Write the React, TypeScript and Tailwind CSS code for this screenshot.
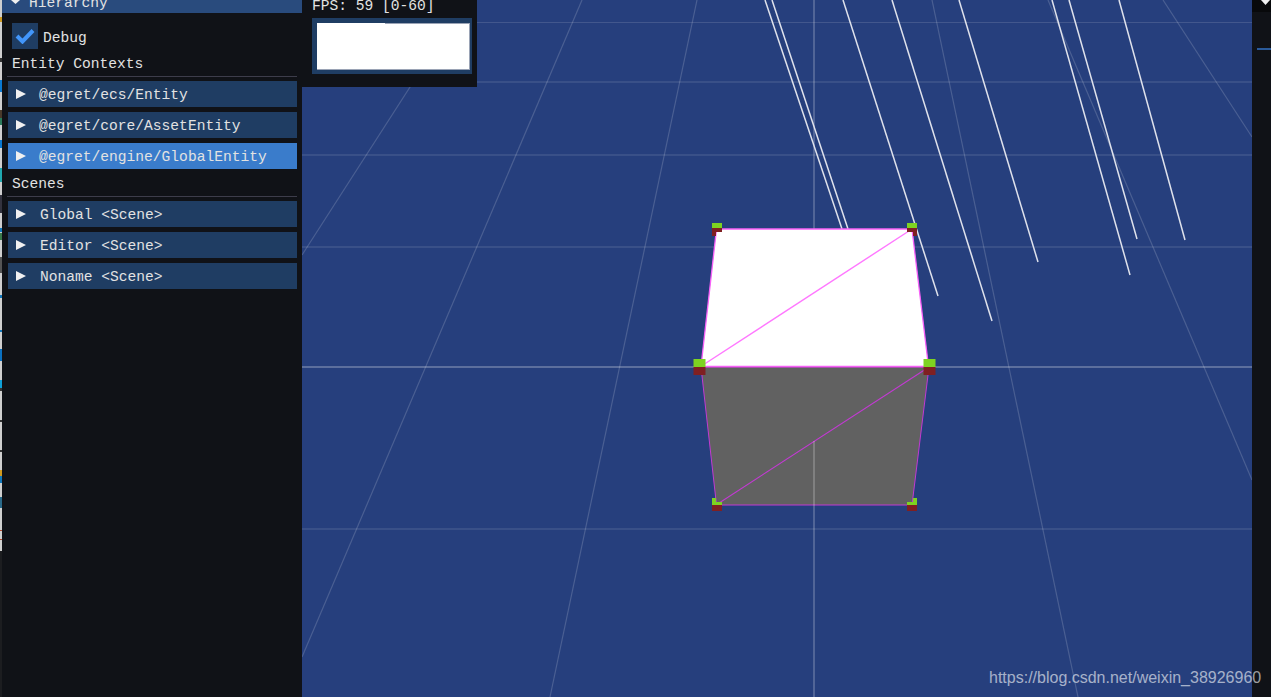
const mono = "font-['Liberation_Mono',monospace] text-[14.6px] leading-[17px] text-[#e2e2e2]";

const greys = [
  { a: [582, 0], b: [302, 657] },
  { a: [697, 0], b: [550, 697] },
  { a: [466, 0], b: [302, 255] },
  { a: [932, 0], b: [1078, 697] },
  { a: [1048, 0], b: [1252, 480] },
  { a: [1163, 0], b: [1252, 137] },
];
const whites = [
  [765, 0, 842, 229],
  [772, 0, 848, 229],
  [843, 0, 938, 296],
  [892, 0, 992, 321],
  [959, 0, 1038, 262],
  [1052, 0, 1130, 275],
  [1069, 0, 1137, 239],
  [1119, 0, 1185, 240],
];
const horizontals = [
  { y: 22.5, o: 0.13, w: 1 },
  { y: 82, o: 0.18, w: 1.2 },
  { y: 155, o: 0.18, w: 1.2 },
  { y: 247, o: 0.18, w: 1.2 },
  { y: 367, o: 0.25, w: 2 },
  { y: 529, o: 0.18, w: 1.2 },
];

const GREEN = "#7ed321";
const RED = "#7f2022";

function TopHandle({ x, right }: { x: number; right?: boolean }) {
  return (
    <g>
      <rect x={x} y={223} width={10} height={5} fill={GREEN} />
      <rect x={x} y={228} width={10} height={4} fill={RED} />
      <rect x={right ? x + 6 : x} y={232} width={4} height={4} fill={RED} />
    </g>
  );
}

function BottomHandle({ x, right }: { x: number; right?: boolean }) {
  return (
    <g>
      <rect x={right ? x + 6 : x} y={498} width={4} height={4} fill={GREEN} />
      <rect x={x} y={502} width={10} height={3} fill={GREEN} />
      <rect x={x} y={505} width={10} height={6} fill={RED} />
    </g>
  );
}

function MidHandle({ x }: { x: number }) {
  return (
    <g>
      <rect x={x} y={359} width={12} height={8} fill={GREEN} />
      <rect x={x} y={367} width={12} height={8} fill={RED} />
    </g>
  );
}

function Scene() {
  return (
    <svg width="950" height="697" viewBox="302 0 950 697" className="block">
      {horizontals.map((l) => (
        <line key={l.y} x1="302" x2="1252" y1={l.y} y2={l.y} stroke="#fff" strokeOpacity={l.o} strokeWidth={l.w} />
      ))}
      {greys.map((l, i) => (
        <line key={i} x1={l.a[0]} y1={l.a[1]} x2={l.b[0]} y2={l.b[1]} stroke="#fff" strokeOpacity="0.17" strokeWidth="1.2" />
      ))}
      <line x1="814" x2="814" y1="0" y2="229" stroke="#fff" strokeOpacity="0.2" strokeWidth="2" />
      {whites.map((l, i) => (
        <line key={i} x1={l[0]} y1={l[1]} x2={l[2]} y2={l[3]} stroke="#dfe2ec" strokeWidth="1.5" />
      ))}
      <polygon points="701,367 929,367 912,505 716.5,505" fill="#616161" stroke="#c23ad2" strokeWidth="1" />
      <polygon points="716.5,229 912,229 928.5,366.5 701,366.5" fill="#ffffff" stroke="#f860f8" strokeWidth="1.3" />
      <line x1="703" y1="365" x2="912" y2="229" stroke="#ff78ff" strokeWidth="1.4" />
      <line x1="716" y1="505" x2="929" y2="367" stroke="#c23ad2" strokeWidth="1.1" />
      <line x1="814" x2="814" y1="441" y2="697" stroke="#fff" strokeOpacity="0.2" strokeWidth="2" />
      <TopHandle x={712} />
      <TopHandle x={907} right />
      <BottomHandle x={712} />
      <BottomHandle x={907} right />
      <MidHandle x={693.5} />
      <MidHandle x={923.5} />
    </svg>
  );
}

function Arrow() {
  return (
    <svg width="10" height="10" viewBox="0 0 10 10" className="shrink-0">
      <polygon points="0,0 10,5 0,10" fill="#f0f0f0" />
    </svg>
  );
}

function Row({ label, active, scene }: { label: string; active?: boolean; scene?: boolean }) {
  return (
    <div className={`flex h-[26px] w-[289px] items-center pl-[8px] ${active ? "bg-[#3a7ccb]" : "bg-[#1f3d63]"}`}>
      <Arrow />
      <span className={`mt-[3px] whitespace-pre ${scene ? "ml-[14px]" : "ml-[13px]"} ${mono}`}>{label}</span>
    </div>
  );
}

const L = "bg-[#cfcfcf]";
const strip = [
  { h: 17, c: L },
  { h: 5, c: "bg-[#d09a20]" },
  { h: 36, c: L },
  { h: 4, c: "bg-[#333333]" },
  { h: 18, c: L },
  { h: 12, c: "bg-[#0a78d0]" },
  { h: 18, c: L },
  { h: 8, c: "bg-[#4a3a2a]" },
  { h: 7, c: "bg-[#2a7a5a]" },
  { h: 15, c: L },
  { h: 8, c: "bg-[#0a78d0]" },
  { h: 20, c: L },
  { h: 14, c: "bg-[#20a8b0]" },
  { h: 13, c: L },
  { h: 18, c: "bg-[#33333f]" },
  { h: 15, c: L },
  { h: 4, c: "bg-[#1177bb]" },
  { h: 1, c: L },
  { h: 7, c: "bg-[#3a7a4a]" },
  { h: 17, c: L },
  { h: 16, c: "bg-[#555555]" },
  { h: 22, c: L },
  { h: 3, c: "bg-[#1177bb]" },
  { h: 32, c: L },
  { h: 2, c: "bg-[#1177bb]" },
  { h: 17, c: L },
  { h: 12, c: "bg-[#0a70c0]" },
  { h: 19, c: L },
  { h: 8, c: "bg-[#10a0d8]" },
  { h: 3, c: "bg-[#333333]" },
  { h: 29, c: L },
  { h: 2, c: "bg-[#333333]" },
  { h: 28, c: L },
  { h: 2, c: "bg-[#333333]" },
  { h: 18, c: L },
  { h: 6, c: "bg-[#d09a20]" },
  { h: 7, c: "bg-[#1177bb]" },
  { h: 14, c: L },
  { h: 11, c: "bg-[#2a6a8a]" },
  { h: 22, c: L },
  { h: 1, c: "bg-[#b04a30]" },
  { h: 8, c: L },
  { h: 1, c: "bg-[#b04a30]" },
  { h: 11, c: L },
];

export default function App() {
  return (
    <div className="relative flex h-[697px] w-[1271px] overflow-hidden bg-[#101217]">
      <div className="flex w-[2px] shrink-0 flex-col bg-[#1c1d20]">
        {strip.map((s, i) => (
          <div key={i} className={s.c} style={{ height: s.h }} />
        ))}
      </div>

      <aside className="flex w-[300px] shrink-0 flex-col bg-[#101217]">
        <div className="flex h-[13px] items-center overflow-hidden bg-[#294b7d] pl-[9px]">
          <svg width="9" height="4" viewBox="0 0 9 4" className="mb-[9px] shrink-0">
            <polygon points="0,0 9,0 4.5,4" fill="#f0f0f0" />
          </svg>
          <span className={`ml-[9px] -mt-[7px] ${mono}`}>Hierarchy</span>
        </div>

        <div className="ml-[10px] mt-[10px] flex h-[26px] items-center">
          <div className="flex h-[26px] w-[26px] items-center justify-center bg-[#1f3d63]">
            <svg width="20" height="16" viewBox="0 0 20 16">
              <path d="M2 8 L7.5 13.5 L18 2.5" fill="none" stroke="#4296fa" strokeWidth="4" />
            </svg>
          </div>
          <span className={`ml-[5px] mt-[4px] ${mono}`}>Debug</span>
        </div>

        <div className={`ml-[10px] mt-[7px] ${mono}`}>Entity Contexts</div>
        <div className="ml-[5px] mt-[3px] h-[1px] w-[290px] bg-[#3d3d4b]" />
        <div className="ml-[6px] mt-[4px] flex flex-col gap-[5px]">
          <Row label="@egret/ecs/Entity" />
          <Row label="@egret/core/AssetEntity" />
          <Row label="@egret/engine/GlobalEntity" active />
        </div>

        <div className={`ml-[10px] mt-[7px] ${mono}`}>Scenes</div>
        <div className="ml-[5px] mt-[3px] h-[1px] w-[290px] bg-[#3d3d4b]" />
        <div className="ml-[6px] mt-[4px] flex flex-col gap-[5px]">
          <Row label="Global <Scene>" scene />
          <Row label="Editor <Scene>" scene />
          <Row label="Noname <Scene>" scene />
        </div>
      </aside>

      <main className="relative w-[950px] shrink-0 overflow-hidden bg-[#263f7d]">
        <Scene />
        <div className="absolute left-0 top-0 h-[87px] w-[175px] bg-[#101217] pl-[10px]">
          <div className={`-mt-[2px] ${mono}`}>FPS: 59 [0-60]</div>
          <div className="mt-[3px] h-[56px] w-[160px] bg-[#1f3d63] pl-[5px] pt-[5px]">
            <div className="h-[47px] w-[153px] border-b border-r border-[#9aa3b5] bg-white">
              <div className="ml-[68px] h-[1px] bg-[#9aa3b5]" />
            </div>
          </div>
        </div>
      </main>

      <div className="flex w-[19px] shrink-0 flex-col bg-[#101217]">
        <div className="flex h-[12px] justify-center bg-[#08090b] pl-[7px]">
          <svg width="9" height="5" viewBox="0 0 9 5">
            <polygon points="0,0 9,0 4.5,5" fill="#f0f0f0" />
          </svg>
        </div>
        <div className="ml-[5px] mt-[36px] h-[2px] w-[14px] bg-[#2a5a9a]" />
      </div>

      <div className="absolute left-[989px] top-[668px] whitespace-nowrap font-['Liberation_Sans',sans-serif] text-[16px] leading-[20px] text-white/60">
        https://blog.csdn.net/weixin_38926960
      </div>
    </div>
  );
}
